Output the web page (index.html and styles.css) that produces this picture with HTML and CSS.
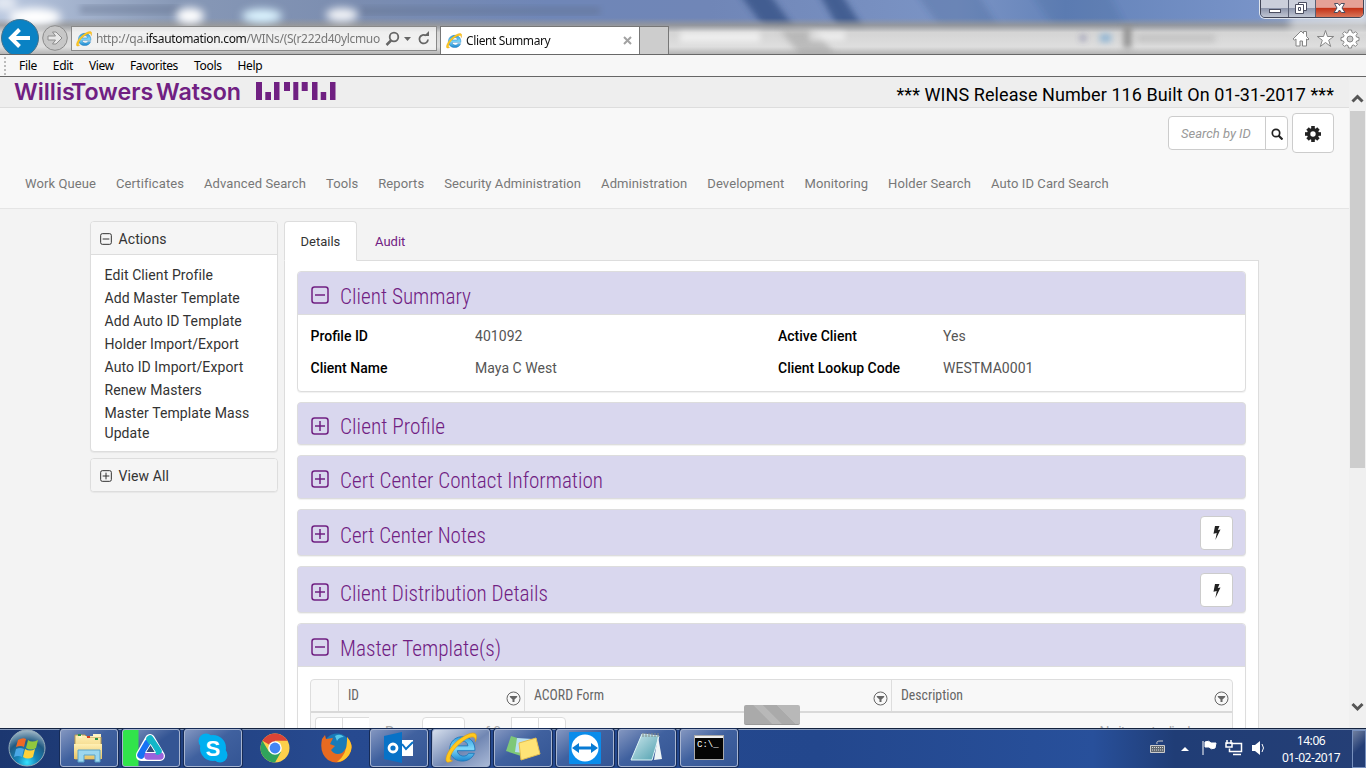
FILE: index.html
```html
<!DOCTYPE html>
<html lang="en">
<head>
<meta charset="utf-8">
<title>Client Summary</title>
<link rel="stylesheet" href="styles.css">
</head>
<body>
<svg class="defs" aria-hidden="true">
  <defs>
    <linearGradient id="glass" x1="0" y1="0" x2="1" y2="0"><stop offset="0" stop-color="#b9c7df"/><stop offset=".13" stop-color="#8798b6"/><stop offset=".26" stop-color="#7b8db0"/><stop offset=".4" stop-color="#6f86b7"/><stop offset=".52" stop-color="#7086b7"/><stop offset=".7" stop-color="#7b94c5"/><stop offset=".78" stop-color="#6483b9"/><stop offset=".92" stop-color="#7893c8"/><stop offset="1" stop-color="#aebbd1"/></linearGradient>
    <linearGradient id="bar" x1="0" y1="0" x2="0" y2="1"><stop offset="0" stop-color="#999" stop-opacity="0"/><stop offset=".2" stop-color="#999" stop-opacity=".85"/><stop offset=".4" stop-color="#d4d4d4"/><stop offset=".8" stop-color="#dedede"/><stop offset="1" stop-color="#b5b5b5"/></linearGradient>
    <radialGradient id="orb" cx=".5" cy=".9" r=".9"><stop offset="0" stop-color="#36e3ff"/><stop offset=".3" stop-color="#1686b9"/><stop offset=".65" stop-color="#205a83"/><stop offset="1" stop-color="#a6bccb"/></radialGradient>
    <linearGradient id="ieblue" x1="0" y1="0" x2="0" y2="1"><stop offset="0" stop-color="#2f9fe0"/><stop offset=".5" stop-color="#7fd8fa"/><stop offset="1" stop-color="#1b86ce"/></linearGradient>
    <linearGradient id="folder" x1="0" y1="0" x2="0" y2="1"><stop offset="0" stop-color="#fff0b4"/><stop offset="1" stop-color="#e9c465"/></linearGradient>
    <linearGradient id="note" x1="0" y1="0" x2="1" y2="1"><stop offset="0" stop-color="#cfe9ee"/><stop offset="1" stop-color="#4e9fae"/></linearGradient>
    <filter id="b2"><feGaussianBlur stdDeviation="3"/></filter>
    <filter id="b5" x="-50%" y="-100%" width="200%" height="300%"><feGaussianBlur stdDeviation="4.500"/></filter>
  </defs>
  <symbol id="minus" viewBox="0 0 18 18"><rect x="1" y="1" width="16" height="16" rx="2.5" fill="none" stroke="currentColor" stroke-width="1.5"/><path d="M4 9h10" stroke="currentColor" stroke-width="1.5"/></symbol>
  <symbol id="plus" viewBox="0 0 18 18"><rect x="1" y="1" width="16" height="16" rx="2.5" fill="none" stroke="currentColor" stroke-width="1.5"/><path d="M4 9h10M9 4v10" stroke="currentColor" stroke-width="1.5"/></symbol>
  <symbol id="bolt" viewBox="0 0 10 14"><path d="M3 0h4.500L5.800 4l2.700-.4L3.400 14 4.700 7 1.500 7.700z" fill="#222"/></symbol>
  <symbol id="filter" viewBox="0 0 15 15"><circle cx="7.500" cy="7.500" r="6.500" fill="none" stroke="#666" stroke-width="1"/><path d="M3.800 5h7.400v1L8.500 8.400V11h-2V8.400L3.800 6z" fill="#666"/></symbol>
  <symbol id="ie" viewBox="1 1 30 30"><path d="M29 18.500H12.500c.5 6 9 6.500 10.500 2.500h5.500C25 31.500 5.500 31 5.500 17 5.500 1.500 30 1 29 18.500zM12.500 14h10c-.5-6-9.500-6-10 0z" fill="url(#ieblue)" stroke="#1b77ba" stroke-width=".8" fill-rule="evenodd"/><path d="M8 28C-3 34 2 18 13 9 23 1 34-2 29.500 10 30 3.500 24 4.500 16 11 7 18 3 28 8 28z" fill="#ffc91d" stroke="#dc9a13" stroke-width=".6"/></symbol>
</svg>

<header class="chrome">
  <svg class="aero" viewBox="0 0 1366 54" aria-hidden="true">
    <rect width="1366" height="54" fill="url(#glass)"/>
    <g filter="url(#b2)" fill="#2f4c80" opacity=".7"><path d="M738-8h30l34 46h-30z"/><path d="M818-8h22l30 46h-26z"/><path d="M915-8h62l28 46h-57z" opacity=".3"/><path d="M1030-8h78l24 46h-70z" opacity=".2"/></g>
    <g filter="url(#b2)" fill="#5e6d88" opacity=".4"><rect x="80" y="5" width="100" height="9"/><rect x="360" y="7" width="240" height="8"/></g>
    <rect y="18" width="1366" height="36" fill="url(#bar)"/>
    <g filter="url(#b5)" fill="#fff"><ellipse cx="35" cy="17" rx="26" ry="9"/><ellipse cx="190" cy="16" rx="14" ry="8"/><ellipse cx="262" cy="16" rx="20" ry="7" fill="#dcf4ff"/><ellipse cx="342" cy="15" rx="16" ry="7" opacity=".9"/><ellipse cx="5" cy="3" rx="12" ry="8" opacity=".6"/><rect x="1290" y="14" width="80" height="16" opacity=".5"/></g>
    <g filter="url(#b2)"><path d="M780 30h35l20 24h-36z" fill="#999" opacity=".5"/><path d="M680 32h80v10H680zM810 32h35v8H810z" fill="#fff" opacity=".6"/><path d="M1124 26h7v22h-7z" fill="#888"/><path d="M1137 35h78v7h-78z" fill="#aaa" opacity=".5"/><path d="M1081 36h4v4h-4z" fill="#55578c"/><path d="M1100 34h11v8h-11z" fill="#8db4d4"/></g>
  </svg>
  <div class="window-buttons">
    <span class="wb"><svg width="28" height="18"><rect x="8.500" y="9.500" width="11" height="3" fill="#fff" stroke="#4b4e60"/></svg></span>
    <span class="wb"><svg width="26" height="18" fill="#fff" stroke="#4b4e60"><path d="M9.500 2.500h8v8h-8z"/><path d="M6.500 4.500h8v9h-8z"/><path d="M9.500 7.500h2v3h-2z" fill="none"/></svg></span>
    <span class="wb close"><svg width="46" height="18"><path d="M18.500 3.500h3.500l1.500 2 1.500-2h3.500L26 8l3 4.500h-3.500l-2-2.500-2 2.500H18L21 8z" fill="#fff" stroke="#4b4e60"/></svg></span>
  </div>
  <div class="toolbar">
    <svg class="navs" width="70" height="36" viewBox="0 18 70 36"><circle cx="20" cy="38" r="18.500" fill="#0a82c4" stroke="#45718a"/><path d="M30 38H12M19.500 29.500 11 38l8.500 8.500" fill="none" stroke="#fff" stroke-width="4"/><circle cx="55" cy="38" r="12.300" fill="#c7c7c7" stroke="#8b8b8b"/><path d="M48 36h7.500l-3-4h3.500l6 6-6 6h-3.500l3-4H48z" fill="#e7e7e7" stroke="#8d8d8d"/></svg>
    <div class="address">
      <svg width="16" height="16"><use href="#ie"/></svg>
      <span class="url">http://qa.<b>ifsautomation.com</b>/WINs/(S(r222d40ylcmuo</span>
      <svg class="addr-icons" width="48" height="16" fill="none" stroke="#666" stroke-width="1.800"><circle cx="9" cy="6" r="4.300"/><path d="M6 9.500 1.500 14" stroke-width="2.500"/><path d="M19 6h7l-3.500 4z" fill="#666" stroke="none"/><path d="M43 8.500a4.300 4.300 0 1 1-2-4"/><path d="M39 5h5V0z" fill="#666" stroke="none"/></svg>
    </div>
    <div class="browser-tab">
      <svg width="16" height="16"><use href="#ie"/></svg><span>Client Summary</span>
      <svg width="9" height="9"><path d="m1 1 7 7M8 1 1 8" stroke="#a2a2a2" stroke-width="2"/></svg>
    </div>
    <div class="new-tab"></div>
    <svg class="tools" width="68" height="20" viewBox="0 0 68 20" fill="#fff" stroke="#858585"><path d="m1 10 8-8 2.500 2.500V2.500h3V7.500L17 10l-1 1-1.500-1v7h-4v-5H8v5H4v-7l-1.500 1z"/><path d="m33.500 1.500 2 6h6.200l-5 3.700 2 6.300-5.200-4-5.200 4 2-6.300-5-3.700h6.200z"/><path fill-rule="evenodd" d="M56.500 1h3l.5 2.500 1.500.6 2-1.400 1.900 1.900-1.400 2 .6 1.500 2.400.4v3l-2.400.5-.6 1.400 1.400 2-1.900 2-2-1.400-1.500.6-.5 2.400h-3l-.5-2.400-1.500-.6-2 1.400-1.900-2 1.400-2-.6-1.400-2.400-.5v-3l2.400-.4.6-1.500-1.400-2 1.900-1.900 2 1.400 1.500-.6z"/><circle cx="58" cy="10" r="3" fill="#ccc"/></svg>
  </div>
</header>

<nav class="menubar"><i class="grip"></i><span>File</span><span>Edit</span><span>View</span><span>Favorites</span><span>Tools</span><span>Help</span></nav>

<div class="viewport">
  <div class="page">
    <div class="brandbar">
      <div class="brand"><svg width="326" height="28"><text class="brand-name" x="0" y="22.500" textLength="227" lengthAdjust="spacingAndGlyphs">Willis<tspan dx="-2">Towers</tspan> <tspan dx="-3">Watson</tspan></text><path fill="#702082" d="M242 5h6v18h-6zM251.300 15h5.700v8h-5.700zM260 5h5.500v18H260zM270 5h6v9h-6zM279.300 5h5v18h-5zM287.700 5h6v9h-6zM298 5h5.500v18H298zM306.700 15h5.500v8h-5.500zM316 5h5.500v18H316z"/></svg></div>
      <div class="release">*** WINS Release Number 116 Built On 01-31-2017 ***</div>
    </div>
    <div class="masthead">
      <div class="search-row">
        <div class="search"><span class="field">Search by ID</span><span class="go"><svg width="12" height="12" fill="none" stroke="#222"><circle cx="5" cy="5" r="3.700" stroke-width="1.700"/><path d="m7.500 7.500 4 4" stroke-width="2.200"/></svg></span></div>
        <div class="gear"><svg width="16" height="16" viewBox="-8 -8 16 16"><g fill="#222"><rect x="-1.800" y="-8" width="3.600" height="16"/><rect x="-8" y="-1.800" width="16" height="3.600"/><rect x="-1.800" y="-7.700" width="3.600" height="15.400" transform="rotate(45)"/><rect x="-1.800" y="-7.700" width="3.600" height="15.400" transform="rotate(-45)"/><circle r="6"/></g><circle r="2.700" fill="#fff"/></svg></div>
      </div>
      <div class="mainnav"><a>Work Queue</a><a>Certificates</a><a>Advanced Search</a><a>Tools</a><a>Reports</a><a>Security Administration</a><a>Administration</a><a>Development</a><a>Monitoring</a><a>Holder Search</a><a>Auto ID Card Search</a></div>
    </div>
    <div class="content">
      <aside>
        <section class="side-panel">
          <h3><svg width="12" height="12"><use href="#minus"/></svg>Actions</h3>
          <ul><li>Edit Client Profile</li><li>Add Master Template</li><li>Add Auto ID Template</li><li>Holder Import/Export</li><li>Auto ID Import/Export</li><li>Renew Masters</li><li>Master Template Mass Update</li></ul>
        </section>
        <section class="side-panel"><h3 class="only"><svg width="12" height="12"><use href="#plus"/></svg>View All</h3></section>
      </aside>
      <main>
        <div class="tabs"><span class="tab active">Details</span><span class="tab">Audit</span></div>
        <div class="tab-body">
          <section class="panel summary">
            <h2><svg class="ico" width="18" height="18"><use href="#minus"/></svg><svg class="title" width="300" height="32"><text x="0" y="24" textLength="131" lengthAdjust="spacingAndGlyphs">Client Summary</text></svg></h2>
            <div class="facts"><b>Profile ID</b><span>401092</span><b>Active Client</b><span>Yes</span><b>Client Name</b><span>Maya C West</span><b>Client Lookup Code</b><span>WESTMA0001</span></div>
          </section>
          <section class="panel short"><h2><svg class="ico" width="18" height="18"><use href="#plus"/></svg><svg class="title" width="300" height="32"><text x="0" y="24" textLength="105" lengthAdjust="spacingAndGlyphs">Client Profile</text></svg></h2></section>
          <section class="panel"><h2><svg class="ico" width="18" height="18"><use href="#plus"/></svg><svg class="title" width="300" height="32"><text x="0" y="24" textLength="263" lengthAdjust="spacingAndGlyphs">Cert Center Contact Information</text></svg></h2></section>
          <section class="panel tall"><h2><svg class="ico" width="18" height="18"><use href="#plus"/></svg><svg class="title" width="300" height="32"><text x="0" y="24" textLength="146" lengthAdjust="spacingAndGlyphs">Cert Center Notes</text></svg></h2><span class="quick"><svg width="10" height="14"><use href="#bolt"/></svg></span></section>
          <section class="panel tall last"><h2><svg class="ico" width="18" height="18"><use href="#plus"/></svg><svg class="title" width="300" height="32"><text x="0" y="24" textLength="208" lengthAdjust="spacingAndGlyphs">Client Distribution Details</text></svg></h2><span class="quick"><svg width="10" height="14"><use href="#bolt"/></svg></span></section>
          <section class="panel master">
            <h2><svg class="ico" width="18" height="18"><use href="#minus"/></svg><svg class="title" width="300" height="32"><text x="0" y="24" textLength="161" lengthAdjust="spacingAndGlyphs">Master Template(s)</text></svg></h2>
            <div class="grid">
              <div class="grid-head"><span></span>
                <span><svg class="label" width="100" height="30"><text x="0" y="20" textLength="11" lengthAdjust="spacingAndGlyphs">ID</text></svg><svg width="15" height="15"><use href="#filter"/></svg></span>
                <span><svg class="label" width="110" height="30"><text x="0" y="20" textLength="70" lengthAdjust="spacingAndGlyphs">ACORD Form</text></svg><svg width="15" height="15"><use href="#filter"/></svg></span>
                <span><svg class="label" width="100" height="30"><text x="0" y="20" textLength="62" lengthAdjust="spacingAndGlyphs">Description</text></svg><svg width="15" height="15"><use href="#filter"/></svg></span></div>
              <div class="pager"><i></i><i></i><span class="pg">Page</span><i class="num"></i><span class="of">of 0</span><i></i><i class="end"></i><span class="empty">No items to display</span></div>
            </div>
          </section>
        </div>
      </main>
    </div>
  </div>
  <div class="scrollbar"><svg width="17" height="34"><path d="m3.500 24.500 5-5 5 5" fill="none" stroke="#555" stroke-width="3"/></svg><div class="thumb"></div><svg class="down" width="17" height="34"><path d="m3.500 10 5 5 5-5" fill="none" stroke="#555" stroke-width="3"/></svg></div>
  <div class="loading"></div>
</div>

<footer class="taskbar">
  <div class="start"><svg width="40" height="40"><circle cx="20" cy="20" r="18" fill="url(#orb)" stroke="#96adba"/><path d="M11 12q5-3 8-1l-2 8q-3-2-8 0z" fill="#ef6a26"/><path d="M21 12q4 3 10 0l-2 8q-5 3-10 0z" fill="#91c83e"/><path d="M9 21q4-2 8 0l-2 8q-4-2-8 0z" fill="#4aa8e6"/><path d="M18 21q5 3 10 0l-2 8q-5 3-10 0z" fill="#ffd13a"/></svg></div>
  <div class="apps">
    <span class="app on"><svg width="36" height="32"><path d="M4 3h10l2 2h14v22H4z" fill="url(#folder)" stroke="#bc9b50"/><path d="M6 5h24v-3h-8v2M8 3h3v3H8z" fill="#fff4c4"/><path d="M7 2h3v2H7zM16 4h3v2h-3zM24 6h3v2h-3z" fill="#2b934a"/><path d="M16 4h3v2h-3z" fill="#d43e20"/><path d="M3 12h28v15H3z" fill="url(#folder)"/><path d="M7 18h22v12h-5v-7H13v7H7z" fill="#9cd7ef" stroke="#5aa4ca"/></svg></span>
    <span class="app on progress"><svg width="34" height="32"><g fill="none" stroke-linecap="round" stroke-linejoin="round"><path d="M7 23 16 7l10 17H7z" stroke="#fff" stroke-width="10"/><path d="m7 23 7-12" stroke="#1672f4" stroke-width="7.500"/><path d="M14 24h12" stroke="#9b63dc" stroke-width="7.500"/><path d="m16 7 8 12" stroke="#12b6c9" stroke-width="7.500"/></g><path d="m16.500 12.500 5 8h-10z" fill="#344e7c" stroke="#fff"/></svg></span>
    <span class="app on"><svg width="34" height="32"><g fill="#00aff0"><circle cx="17" cy="16" r="13"/><circle cx="10" cy="9" r="7.500"/><circle cx="24" cy="23" r="7.500"/></g><text class="skype" x="9.500" y="24">S</text></svg></span>
    <span class="app"><svg width="34" height="34" viewBox="-17 -17 34 34"><circle r="14.500" fill="#fcd04b"/><path d="M0 0-12.550-7.250A14.500 14.500 0 0 1 12.550-7.250H0z" fill="#db4437"/><path d="M-12.550-7.250A14.500 14.500 0 0 0 0 14.500L6.200 3.600H-6.200z" fill="#30a45c"/><circle r="6.800" fill="#fff"/><circle r="5.400" fill="#4285f4"/></svg></span>
    <span class="app"><svg width="34" height="34"><circle cx="17" cy="16" r="13.500" fill="#187bb8"/><path d="M15 5q5-3 9 1-5 0-7 4z" fill="#57c8e8"/><path d="M27 6q8 9 2 18-9 12-21 5-9-7-6-21l3-4 1 4 7-1-3 6 5 2-4 4q4 6 11 3 7-6 5-16z" fill="#e76a20"/><path d="M27 6q8 9 2 18-5 7-12 7 11-8 10-25z" fill="#ffc62c"/></svg></span>
    <span class="app on"><svg width="34" height="34"><path d="M2 5 20 1v31L2 28z" fill="#0872c7"/><path d="M20 9h11v16H20z" fill="#fff"/><path d="m20 13 4 5 7-7" fill="none" stroke="#0872c7" stroke-width="2"/><circle cx="11" cy="17" r="4" fill="none" stroke="#fff" stroke-width="2.800"/></svg></span>
    <span class="app on active"><svg width="32" height="32"><use href="#ie"/></svg></span>
    <span class="app on"><svg width="36" height="34"><path d="m6 5 16 5-6 15L1 20z" fill="#7ec878"/><path d="m12 7 16 1-2 15-16-2z" fill="#b8dff0"/><path d="m14 12 17-5 4 16-19 6z" fill="#ffe477" stroke="#e5be4f"/></svg></span>
    <span class="app on"><svg width="34" height="34"><rect x="1" y="1" width="32" height="32" rx="1" fill="#0a8ceb"/><circle cx="17" cy="17" r="13.500" fill="#fff"/><path d="m4 17 7-5v3.500h12V12l7 5-7 5v-3.500H11V22z" fill="#087bd4"/></svg></span>
    <span class="app on"><svg width="36" height="34"><path d="m13 3 17 2-7 24H2z" fill="url(#note)" stroke="#dcf4f6"/><path d="m29 5 4 23-8 1z" fill="#edf4f5"/><path d="M14 2v4m3-4v4m3-4v4m3-4v4m3-4v4m3-4v4" stroke="#848984"/></svg></span>
    <span class="app on"><svg width="34" height="34"><rect x="2.500" y="4.500" width="29" height="24" fill="#050505" stroke="#aaa"/><path d="M3 5h28v2H3z" fill="#eee"/><text class="cmd" x="5" y="16">C:\_</text></svg></span>
  </div>
  <div class="tray">
    <svg width="126" height="26" viewBox="0 0 126 26"><path d="M1.500 10.500h14v7h-14z" fill="#626970" stroke="#ccc"/><path d="M3 12.500h11M3 15h11" stroke="#ddd" stroke-dasharray="1 1"/><path d="M8 9q-1-3 3-3h3" fill="none" stroke="#ccc"/><path d="m32 16 4-4 4 4z" fill="#fff"/><path d="M54 6v14M56 7q4-2 6 1h5l-1 5q-4 2-6-1h-4z" fill="#fff" stroke="#fff"/><path d="M83.500 8.500h9v8h-12v-3M84 19.500h8M78 5v4M82 5v4M77 8h6v4h-6z" fill="none" stroke="#fff" stroke-width="1.500"/><path d="M103 10h3l5-4v14l-5-4h-3z" fill="#fff"/><path d="M113 9q3 4 0 8" fill="none" stroke="#fff"/></svg>
    <div class="clock">14:06<br>01-02-2017</div><i class="show-desktop"></i>
  </div>
</footer>
</body>
</html>
```

FILE: styles.css
```css
* { box-sizing: border-box; }
body { margin: 0; width: 1366px; height: 768px; overflow: hidden; display: flex; flex-direction: column; font-family: Roboto, Arial, sans-serif; font-size: 14px; color: #333; background: #f3f3f3; }
svg { display: block; flex: none; }
.defs { position: absolute; width: 0; height: 0; }

/* Browser window */
.chrome { position: relative; flex: none; height: 55px; border-bottom: 1px solid #686868; font-family: "Noto Sans", sans-serif; font-size: 12px; overflow: hidden; }
.aero { position: absolute; top: 0; left: 0; width: 1366px; height: 54px; }
.window-buttons { position: absolute; top: -1px; left: 1260px; display: flex; height: 19px; border: 1px solid #424657; border-radius: 0 0 5px 5px; overflow: hidden; box-shadow: 0 0 0 1px #dfe5ed; }
.wb { width: 28px; background: linear-gradient(#cbcfdb 45%, #8e96ac 50%, #c0c6d3); border-right: 1px solid #5a6074; }
.wb:nth-child(2) { width: 27px; }
.wb.close { width: 47px; border: 0; background: linear-gradient(#e5a196 43%, #c43318 50%, #d97559); }
.toolbar { position: relative; display: flex; align-items: flex-end; height: 54px; }
.navs { width: 70px; height: 36px; }
.address { display: flex; align-items: center; width: 366px; height: 25px; margin: 0 3px 3px 1px; padding-left: 4px; border: 1px solid #898989; background: rgba(250,250,250,.72); color: #777; }
.url { width: 286px; margin-left: 4px; white-space: nowrap; letter-spacing: -.32px; }
.url b { color: #111; font-weight: 400; }
.addr-icons { margin-left: 3px; }
.browser-tab { display: flex; align-items: center; width: 200px; height: 28px; padding-left: 5px; background: #fff; border: 1px solid #777; border-bottom: 0; color: #111; }
.browser-tab span { width: 157px; margin-left: 4px; letter-spacing: -.38px; }
.new-tab { width: 29px; height: 28px; border: 1px solid #777; border-left: 0; border-bottom: 0; background: #cdcdcd; }
.tools { margin-left: 623px; margin-bottom: 5px; }
.menubar { display: flex; align-items: center; flex: none; height: 22px; background: #f7f7f7; border-bottom: 1px solid #666; color: #000; font: 12px "Noto Sans", sans-serif; }
.grip { width: 2px; height: 18px; margin: 0 13px 0 4px; border-left: 2px dotted #bbb; }
.menubar span { letter-spacing: -.34px; margin-right: 16px; }

/* Page header */
.viewport { position: relative; display: flex; flex: none; height: 651px; overflow: hidden; }
.page { width: 1349px; height: 651px; overflow: hidden; }
.brandbar { display: flex; justify-content: space-between; height: 31px; background: #eee; border-bottom: 1px solid #ddd; }
.brand { padding-left: 14px; }
.brand-name { font: 600 23px Inter, "Liberation Sans", sans-serif; fill: #702082; }
.release { margin-right: 15px; color: #000; font-size: 18px; line-height: 36px; height: 30px; letter-spacing: .08px; }
.masthead { height: 101px; background: #f8f8f8; border-bottom: 1px solid #e5e5e5; }
.search-row { display: flex; justify-content: flex-end; gap: 4px; height: 62px; padding: 5px 15px 0 0; }
.search { display: flex; width: 120px; height: 34px; margin-top: 3px; border: 1px solid #ccc; border-radius: 4px; background: #fff; }
.field { width: 97px; padding-left: 12px; line-height: 33px; color: #999; font-size: 13px; font-style: italic; border-right: 1px solid #ccc; white-space: nowrap; }
.go { padding: 11px 0 0 5px; }
.gear { width: 42px; height: 40px; border: 1px solid #ccc; border-radius: 4px; background: #fff; padding: 12px; }
.mainnav { display: flex; gap: 20px; padding-left: 25px; font-size: 13px; line-height: 27px; color: #777; letter-spacing: .095px; }
.mainnav a { white-space: nowrap; }

/* Client page */
.content { display: flex; gap: 6px; padding: 12px 0 0 90px; }
aside { width: 188px; }
.side-panel { background: #fff; border: 1px solid #ddd; border-radius: 4px; margin-bottom: 6px; box-shadow: 0 1px 1px rgba(0,0,0,.05); overflow: hidden; }
.side-panel h3 { display: flex; align-items: center; gap: 6.500px; height: 33px; margin: 0; padding: 1px 0 0 9px; background: #f5f5f5; border-bottom: 1px solid #ddd; font-size: 14px; font-weight: 400; letter-spacing: .1px; }
.side-panel h3.only { height: 32px; border: 0; }
.side-panel ul { display: grid; gap: 3px; list-style: none; margin: 0; padding: 10px 13px 8px 13.5px; }
.side-panel li { line-height: 20px; letter-spacing: .09px; }
main { width: 975px; }
.tabs { position: relative; display: flex; height: 40px; font-size: 13px; }
.tab { height: 40px; padding: 0 15.5px; line-height: 40px; color: #702082; border: 1px solid transparent; }
.tab.active { width: 73px; background: #fff; color: #333; border-color: #ddd; border-bottom-color: #fff; border-radius: 4px 4px 0 0; }
.tab + .tab { padding-left: 17px; }
.tab-body { display: flex; flex-direction: column; gap: 10px; height: 520px; margin-top: -1px; padding: 10px 12px; background: #fff; border: 1px solid #ddd; }
.panel { display: flex; flex: none; justify-content: space-between; height: 44px; border: 1px solid #ddd; border-radius: 4px; background: #d9d7ee; box-shadow: 0 1px 1px rgba(0,0,0,.06); overflow: hidden; }
.panel h2 { display: flex; margin: 0; height: 43px; padding: 0 0 0 13px; background: #d9d7ee; color: #702082; }
.panel .ico { margin-top: 14px; }
.panel .title { margin: 8px 0 0 10.5px; fill: #702082; font-family: "Roboto Condensed", Roboto, sans-serif; font-size: 22px; font-weight: 300; overflow: visible; }
.short { height: 43px; }
.short .title { margin-top: 7px; }
.tall { height: 47px; }
.tall .ico { margin-top: 15px; }
.tall .title { margin-top: 9px; }
.last .ico { margin-top: 16px; }
.last .title { margin-top: 10px; }
.quick { display: flex; align-items: center; justify-content: center; width: 33px; height: 34px; margin: 6px 12px 0 0; border: 1px solid #ccc; border-radius: 4px; background: #fff; }
.last .quick svg { margin-top: 2px; }
.summary { display: block; height: 121px; background: #fff; }
.summary h2, .master h2 { border-bottom: 1px solid #ddd; }
.facts { display: grid; grid-template-columns: 164.5px 303px 165px 1fr; grid-auto-rows: 32px; line-height: 32px; padding: 5px 12.5px; color: #555; letter-spacing: .05px; }
.facts b { color: #000; font-weight: 500; letter-spacing: 0; }
.master { display: block; height: 130px; background: #fff; }
.grid { width: 923px; margin: 12px 0 0 12px; border: 1px solid #ddd; border-radius: 4px 4px 0 0; background: #f8f8f8; }
.grid-head { display: grid; grid-template-columns: 27px 186px 367px 1fr; height: 33px; border-bottom: 2px solid #d9d9d9; }
.grid-head > span { display: flex; justify-content: space-between; align-items: center; padding: 5px 3px 0 9px; border-left: 1px solid #ddd; }
.grid-head > span:first-child { border: 0; }
.grid-head .label { margin-top: -6px; font-family: "Roboto Condensed", Roboto, sans-serif; font-size: 14px; fill: #666; }
.pager { display: flex; padding: 4px 4px 0; height: 50px; color: #aaa; line-height: 30px; }
.pager i { width: 27px; height: 28px; border: 1px solid #ddd; border-right-width: 0; background: #fff; }
.pager i:first-child { border-top-left-radius: 4px; }
.pager .end { width: 28px; border-right-width: 1px; border-top-right-radius: 4px; }
.pager .num { width: 43px; border-width: 1px; border-radius: 4px; }
.pg { width: 37px; margin-left: 16px; }
.of { width: 34px; margin-left: 12px; }
.empty { margin: 0 26px 0 auto; letter-spacing: -.9px; }

/* Overlays of the page */
.scrollbar { width: 17px; height: 651px; background: #f0f0f0; padding: 0; }
.thumb { width: 15px; height: 357px; margin-left: 1px; background: #cdcdcd; }
.down { margin-top: 226px; }
.loading { position: absolute; left: 744px; top: 628px; width: 56px; height: 20px; border-radius: 2px; background: linear-gradient(45deg, #b8b8b8 20%, #aaa 21% 40%, #b8b8b8 41% 60%, #aaa 61% 80%, #b8b8b8 81%); background: linear-gradient(45deg, #aaa 37%, #b8b8b8 38% 50%, #aaa 51% 68%, #b8b8b8 69%); border-bottom: 1px solid #999; }

/* Desktop taskbar */
.taskbar { display: flex; flex: none; height: 40px; border-top: 1px solid #13223e; box-shadow: inset 0 1px #8598b9; background: linear-gradient(90deg, #1c3770, #274a90 25%, #23478d 60%, #28509b 80%, #203d76 86%, #253f76); }
.start { width: 60px; padding-left: 7px; margin-top: -1px; }
.apps { display: flex; gap: 4px; }
.app { display: flex; align-items: center; justify-content: center; width: 58px; height: 38px; border: 1px solid transparent; border-radius: 3px; }
.app.on { border-color: #a7b5d1; background: linear-gradient(145deg, #8396c0, #40619f 45%, #345594); box-shadow: 0 0 0 1px #162b56; }
.app.progress { background: linear-gradient(90deg, #31e44b 0 15px, transparent 16px), linear-gradient(145deg, #8396c0, #345594 50%); }
.app.active { background: linear-gradient(145deg, #d5deec, #7187b3 55%, #a8b8d6); }
.skype { font: 700 22px "Liberation Sans", sans-serif; fill: #fff; }
.cmd { font: 9px "Liberation Mono", monospace; fill: #fff; }
.tray { display: flex; margin-left: auto; padding-top: 6px; }
.clock { width: 66px; margin-left: 3px; color: #fff; font: 12px/17px "Noto Sans", sans-serif; letter-spacing: -.45px; text-align: center; margin-top: -3px; }
.show-desktop { width: 14px; height: 38px; margin: -5px 0 0 8px; border: 1px solid #7790be; background: linear-gradient(135deg, #71809f, #243e76 50%); }
```
